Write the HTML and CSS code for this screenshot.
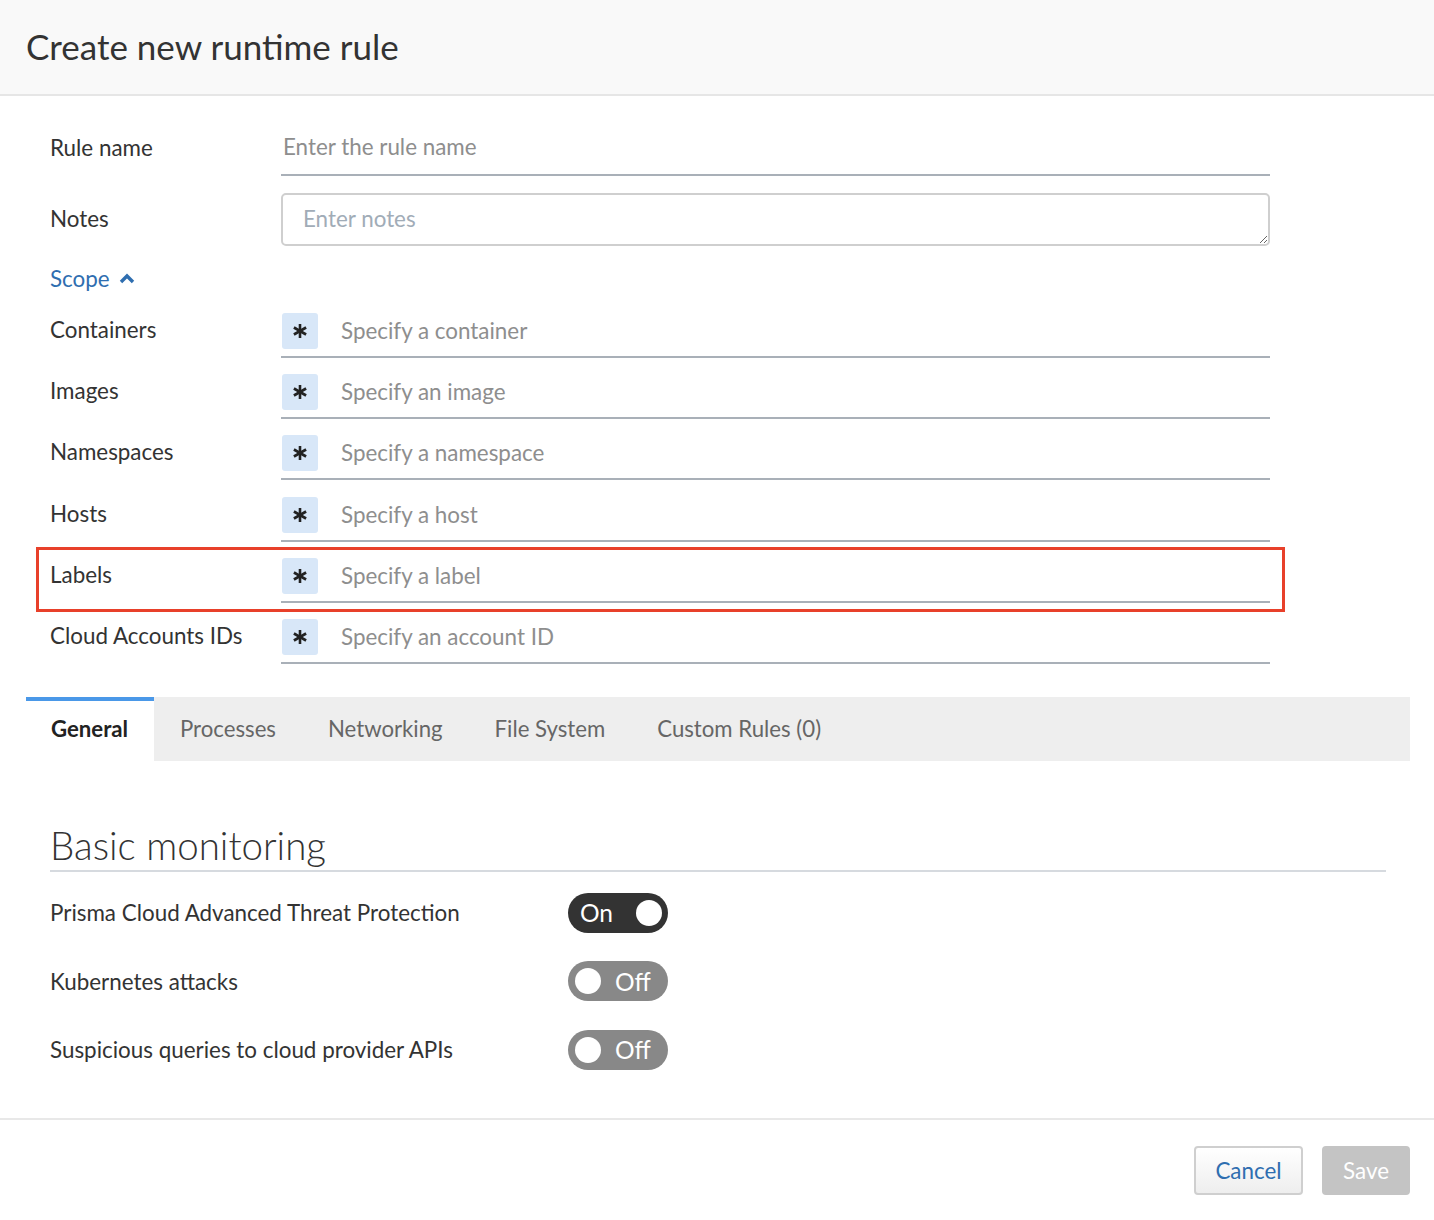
FILE: index.html
```html
<!DOCTYPE html>
<html lang="en">
<head>
<meta charset="utf-8">
<title>Create new runtime rule</title>
<link rel="stylesheet" href="styles.css">
</head>
<body>
<div class="dialog">
  <header class="header">
    <h1 class="title">Create new runtime rule</h1>
  </header>

  <section class="form">
    <div class="row row-name">
      <label class="label">Rule name</label>
      <div class="field field-line">
        <input class="input" type="text" placeholder="Enter the rule name">
      </div>
    </div>

    <div class="row row-notes">
      <label class="label">Notes</label>
      <textarea class="notes" placeholder="Enter notes"></textarea>
    </div>

    <div class="scope-toggle">
      <span>Scope</span>
      <svg class="chev" width="16" height="12" viewBox="0 0 16 12"><polyline points="2,10 8,4 14,10" fill="none" stroke="#2f6eb0" stroke-width="3.4" stroke-linecap="butt" stroke-linejoin="miter"/></svg>
    </div>

    <div class="scope-list">
      <div class="row scope-row">
        <label class="label">Containers</label>
        <div class="field scope-field">
          <span class="star"><svg width="16" height="16" viewBox="0 0 16 16"><g stroke="#222" stroke-width="2.6" stroke-linecap="butt"><line x1="8" y1="1" x2="8" y2="15"/><line x1="1.9" y1="4.5" x2="14.1" y2="11.5"/><line x1="1.9" y1="11.5" x2="14.1" y2="4.5"/></g></svg></span>
          <span class="ph">Specify a container</span>
        </div>
      </div>
      <div class="row scope-row">
        <label class="label">Images</label>
        <div class="field scope-field">
          <span class="star"><svg width="16" height="16" viewBox="0 0 16 16"><g stroke="#222" stroke-width="2.6"><line x1="8" y1="1" x2="8" y2="15"/><line x1="1.9" y1="4.5" x2="14.1" y2="11.5"/><line x1="1.9" y1="11.5" x2="14.1" y2="4.5"/></g></svg></span>
          <span class="ph">Specify an image</span>
        </div>
      </div>
      <div class="row scope-row">
        <label class="label">Namespaces</label>
        <div class="field scope-field">
          <span class="star"><svg width="16" height="16" viewBox="0 0 16 16"><g stroke="#222" stroke-width="2.6"><line x1="8" y1="1" x2="8" y2="15"/><line x1="1.9" y1="4.5" x2="14.1" y2="11.5"/><line x1="1.9" y1="11.5" x2="14.1" y2="4.5"/></g></svg></span>
          <span class="ph">Specify a namespace</span>
        </div>
      </div>
      <div class="row scope-row">
        <label class="label">Hosts</label>
        <div class="field scope-field">
          <span class="star"><svg width="16" height="16" viewBox="0 0 16 16"><g stroke="#222" stroke-width="2.6"><line x1="8" y1="1" x2="8" y2="15"/><line x1="1.9" y1="4.5" x2="14.1" y2="11.5"/><line x1="1.9" y1="11.5" x2="14.1" y2="4.5"/></g></svg></span>
          <span class="ph">Specify a host</span>
        </div>
      </div>
      <div class="row scope-row highlighted">
        <label class="label">Labels</label>
        <div class="field scope-field">
          <span class="star"><svg width="16" height="16" viewBox="0 0 16 16"><g stroke="#222" stroke-width="2.6"><line x1="8" y1="1" x2="8" y2="15"/><line x1="1.9" y1="4.5" x2="14.1" y2="11.5"/><line x1="1.9" y1="11.5" x2="14.1" y2="4.5"/></g></svg></span>
          <span class="ph">Specify a label</span>
        </div>
        <span class="highlight-box"></span>
      </div>
      <div class="row scope-row">
        <label class="label">Cloud Accounts IDs</label>
        <div class="field scope-field">
          <span class="star"><svg width="16" height="16" viewBox="0 0 16 16"><g stroke="#222" stroke-width="2.6"><line x1="8" y1="1" x2="8" y2="15"/><line x1="1.9" y1="4.5" x2="14.1" y2="11.5"/><line x1="1.9" y1="11.5" x2="14.1" y2="4.5"/></g></svg></span>
          <span class="ph">Specify an account ID</span>
        </div>
      </div>
    </div>
  </section>

  <nav class="tabs">
    <div class="tab active">General</div>
    <div class="tab">Processes</div>
    <div class="tab">Networking</div>
    <div class="tab">File System</div>
    <div class="tab">Custom Rules (0)</div>
  </nav>

  <section class="monitoring">
    <h2 class="section-title">Basic monitoring</h2>
    <div class="toggle-row">
      <span class="toggle-label">Prisma Cloud Advanced Threat Protection</span>
      <span class="toggle on"><span class="toggle-text">On</span><span class="knob"></span></span>
    </div>
    <div class="toggle-row">
      <span class="toggle-label">Kubernetes attacks</span>
      <span class="toggle off"><span class="knob"></span><span class="toggle-text">Off</span></span>
    </div>
    <div class="toggle-row">
      <span class="toggle-label">Suspicious queries to cloud provider APIs</span>
      <span class="toggle off"><span class="knob"></span><span class="toggle-text">Off</span></span>
    </div>
  </section>

  <footer class="footer">
    <button class="btn btn-cancel">Cancel</button>
    <button class="btn btn-save">Save</button>
  </footer>
</div>
</body>
</html>
```

FILE: styles.css
```css
* { box-sizing: border-box; }

html, body {
  margin: 0;
  padding: 0;
  background: #ffffff;
}

body {
  font-family: Lato, "Open Sans", "Liberation Sans", sans-serif;
  color: #333333;
  width: 1434px;
}

.dialog {
  width: 1434px;
}

.header {
  height: 96px;
  background: #f9f9f9;
  border-bottom: 2px solid #e6e6e6;
  padding-left: 26px;
  display: flex;
  align-items: center;
}

.title {
  margin: 0;
  margin-top: -2px;
  font-size: 35px;
  font-weight: 400;
  color: #333;
}

.form {
  padding: 27px 164px 0 50px;
}

.row {
  display: flex;
  align-items: center;
}

.label {
  width: 231px;
  flex: none;
  font-size: 22.4px;
  color: #333;
}

.field {
  flex: 1;
}

.field-line {
  border-bottom: 2px solid #a9b0b8;
  height: 53px;
  display: flex;
  align-items: center;
}

.row-name .label {
  margin-top: -4px;
}

.input {
  border: none;
  outline: none;
  width: 100%;
  font-family: inherit;
  font-size: 22.4px;
  padding: 0 0 4px 2px;
  color: #333;
  background: transparent;
}

.input::placeholder {
  color: #8e8e8e;
}

.row-notes {
  margin-top: 17px;
}

.row-notes .label {
  margin-top: -2px;
}

.notes {
  flex: 1;
  height: 53px;
  border: 2px solid #cfcfcf;
  border-radius: 5px;
  font-family: inherit;
  font-size: 22.4px;
  line-height: 26px;
  padding: 11px 20px;
  resize: vertical;
  outline: none;
  color: #333;
  display: block;
}

.notes::placeholder {
  color: #a1acb7;
}

.scope-toggle {
  margin-top: 19px;
  height: 26px;
  display: flex;
  align-items: center;
  gap: 9px;
  color: #2f6eb0;
  font-size: 22.4px;
}

.scope-list {
  margin-top: 14px;
  display: flex;
  flex-direction: column;
  gap: 8.2px;
}

.scope-row {
  position: relative;
}

.scope-row .label {
  margin-top: -4px;
}

.scope-field {
  display: flex;
  align-items: center;
  padding: 8px 0 7px 1px;
  border-bottom: 2px solid #a9b0b8;
}

.star {
  width: 36px;
  height: 36px;
  background: #d8e7f8;
  border-radius: 3px;
  display: flex;
  align-items: center;
  justify-content: center;
  flex: none;
}

.ph {
  margin-left: 23px;
  font-size: 22.4px;
  color: #8e8e8e;
  margin-top: -1px;
}

.highlight-box {
  position: absolute;
  left: -14px;
  right: -15px;
  top: -3px;
  bottom: -9px;
  border: 3px solid #e8402a;
  pointer-events: none;
}

.tabs {
  margin: 33px 24px 0 26px;
  height: 64px;
  background: #eeeeee;
  display: flex;
}

.tab {
  padding: 0 26px;
  display: flex;
  align-items: center;
  font-size: 22.2px;
  color: #666;
  height: 64px;
}

.tab.active {
  background: #ffffff;
  border-top: 4px solid #4a98e8;
  padding: 0 25px 4px 25px;
  color: #222;
  font-weight: 700;
  width: 128px;
}

.monitoring {
  padding: 0 48px 0 50px;
}

.section-title {
  margin: 61px 0 0 0;
  font-size: 38.5px;
  font-weight: 300;
  color: #333;
  padding-bottom: 2px;
  border-bottom: 2px solid #d6dadf;
  line-height: 46px;
}

.toggle-row {
  display: flex;
  align-items: center;
  height: 40px;
  margin-top: 21px;
}

.toggle-row + .toggle-row {
  margin-top: 28.5px;
}

.toggle-label {
  width: 518px;
  font-size: 22.4px;
  color: #333;
}

.toggle {
  width: 100px;
  height: 40px;
  border-radius: 20px;
  display: flex;
  align-items: center;
  padding: 0 6px 0 12px;
  color: #fff;
  font-size: 24.5px;
}

.toggle.on {
  background: #333333;
  justify-content: space-between;
}

.toggle.off {
  background: #888888;
  padding: 0 0 0 7px;
  gap: 14px;
  justify-content: flex-start;
}

.knob {
  width: 26px;
  height: 26px;
  border-radius: 50%;
  background: #ffffff;
  flex: none;
}

.footer {
  margin-top: 48px;
  border-top: 2px solid #e8e8e8;
  padding: 26px 24px 0 0;
  display: flex;
  justify-content: flex-end;
  gap: 19px;
}

.btn {
  height: 49px;
  font-family: inherit;
  font-size: 22.4px;
  border-radius: 4px;
  cursor: pointer;
}

.btn-cancel {
  width: 109px;
  border: 2px solid #cfcfcf;
  background: linear-gradient(#ffffff, #eeeeee);
  color: #2f6eb0;
}

.btn-save {
  width: 88px;
  border: none;
  background: #c4c4c4;
  color: #ffffff;
}
```
